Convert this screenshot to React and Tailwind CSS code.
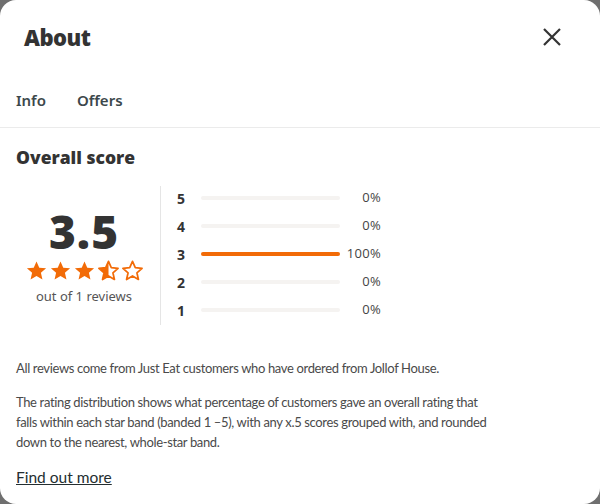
import React from 'react';

const ORANGE = '#f26b07';
const STAR = 'M12 2.5l2.9 6.6 7.1.6-5.4 4.7 1.6 7-6.2-3.7-6.2 3.7 1.6-7L2 9.7l7.1-.6z';

const Star = ({ type }) => (
  <svg width="23" height="23" viewBox="0 0 24 24">
    <defs>
      <clipPath id="half">
        <rect x="0" y="0" width="12" height="24" />
      </clipPath>
    </defs>
    {type === 'full' && <path d={STAR} fill={ORANGE} />}
    {type !== 'full' && (
      <path d={STAR} fill="none" stroke={ORANGE} strokeWidth="1.8" strokeLinejoin="round" />
    )}
    {type === 'half' && <path d={STAR} fill={ORANGE} clipPath="url(#half)" />}
  </svg>
);

const rows = [
  { n: 5, pct: 0 },
  { n: 4, pct: 0 },
  { n: 3, pct: 100 },
  { n: 2, pct: 0 },
  { n: 1, pct: 0 },
];

export default function App() {
  return (
    <div className="w-[600px] h-[504px] bg-[#6f6f6f] overflow-hidden">
      <div className="w-full h-full bg-white rounded-[16px] flex flex-col text-[#242e30] font-['Noto_Sans',sans-serif]">
        {/* Header */}
        <div className="h-[74px] flex items-center justify-between pl-6 pr-[38px]">
          <h2 className="text-[22px] font-extrabold text-[#333] tracking-tight font-['Open_Sans',sans-serif]">
            About
          </h2>
          <svg width="20" height="20" viewBox="0 0 20 20" className="text-[#333]">
            <path d="M2 2l16 16M18 2L2 18" stroke="currentColor" strokeWidth="2.2" />
          </svg>
        </div>

        {/* Tabs */}
        <div className="h-[54px] flex items-center gap-[31px] px-4 border-b border-[#ebebeb] text-[15px] font-semibold text-[#3c484b]">
          <span>Info</span>
          <span>Offers</span>
        </div>

        <div className="px-4">
          <h3 className="mt-[17px] text-[17.5px] font-extrabold text-[#333] leading-[24px] font-['Open_Sans',sans-serif]">
            Overall score
          </h3>

          <div className="mt-[17px] flex">
            {/* Score summary */}
            <div className="w-[136px] flex flex-col items-center pt-[19px]">
              <div className="text-[46px] leading-[52px] text-[#333] tracking-[1px] font-extrabold font-['Open_Sans',sans-serif]">
                3.5
              </div>
              <div className="flex gap-[1px] mt-[2px]">
                <Star type="full" />
                <Star type="full" />
                <Star type="full" />
                <Star type="half" />
                <Star type="empty" />
              </div>
              <div className="text-[13px] text-[#555] mt-[5px]">out of 1 reviews</div>
            </div>

            <div className="ml-[8px] w-px h-[139px] bg-[#e5e5e5]" />

            {/* Distribution */}
            <div className="pl-[16px] -mt-[2px] flex flex-col font-['Open_Sans',sans-serif]">
              {rows.map((r) => (
                <div key={r.n} className="h-[28px] flex items-center">
                  <span className="w-[24px] text-[14px] font-bold text-[#333]">{r.n}</span>
                  <div className="w-[139px] h-[4px] rounded-full bg-[#f5f3f1]">
                    <div className="h-full rounded-full" style={{ width: `${r.pct}%`, background: ORANGE }} />
                  </div>
                  <span className="w-[41px] text-right text-[13px] text-[#444] tracking-wide">{r.pct}%</span>
                </div>
              ))}
            </div>
          </div>

          <div className="max-w-[478px] text-[13px] leading-[20px] tracking-[-0.35px] text-[#4a4a4a] font-['Lato',sans-serif]">
            <p className="mt-[33px]">
              All reviews come from Just Eat customers who have ordered from Jollof House.
            </p>
            <p className="mt-[14px]">
              The rating distribution shows what percentage of customers gave an overall rating that falls within each star band (banded 1 –5), with any x.5 scores grouped with, and rounded down to the nearest, whole-star band.
            </p>
          </div>
          <a className="inline-block mt-[14px] text-[15.5px] underline text-[#242e30] font-['Lato',sans-serif]">Find out more</a>
        </div>
      </div>
    </div>
  );
}
